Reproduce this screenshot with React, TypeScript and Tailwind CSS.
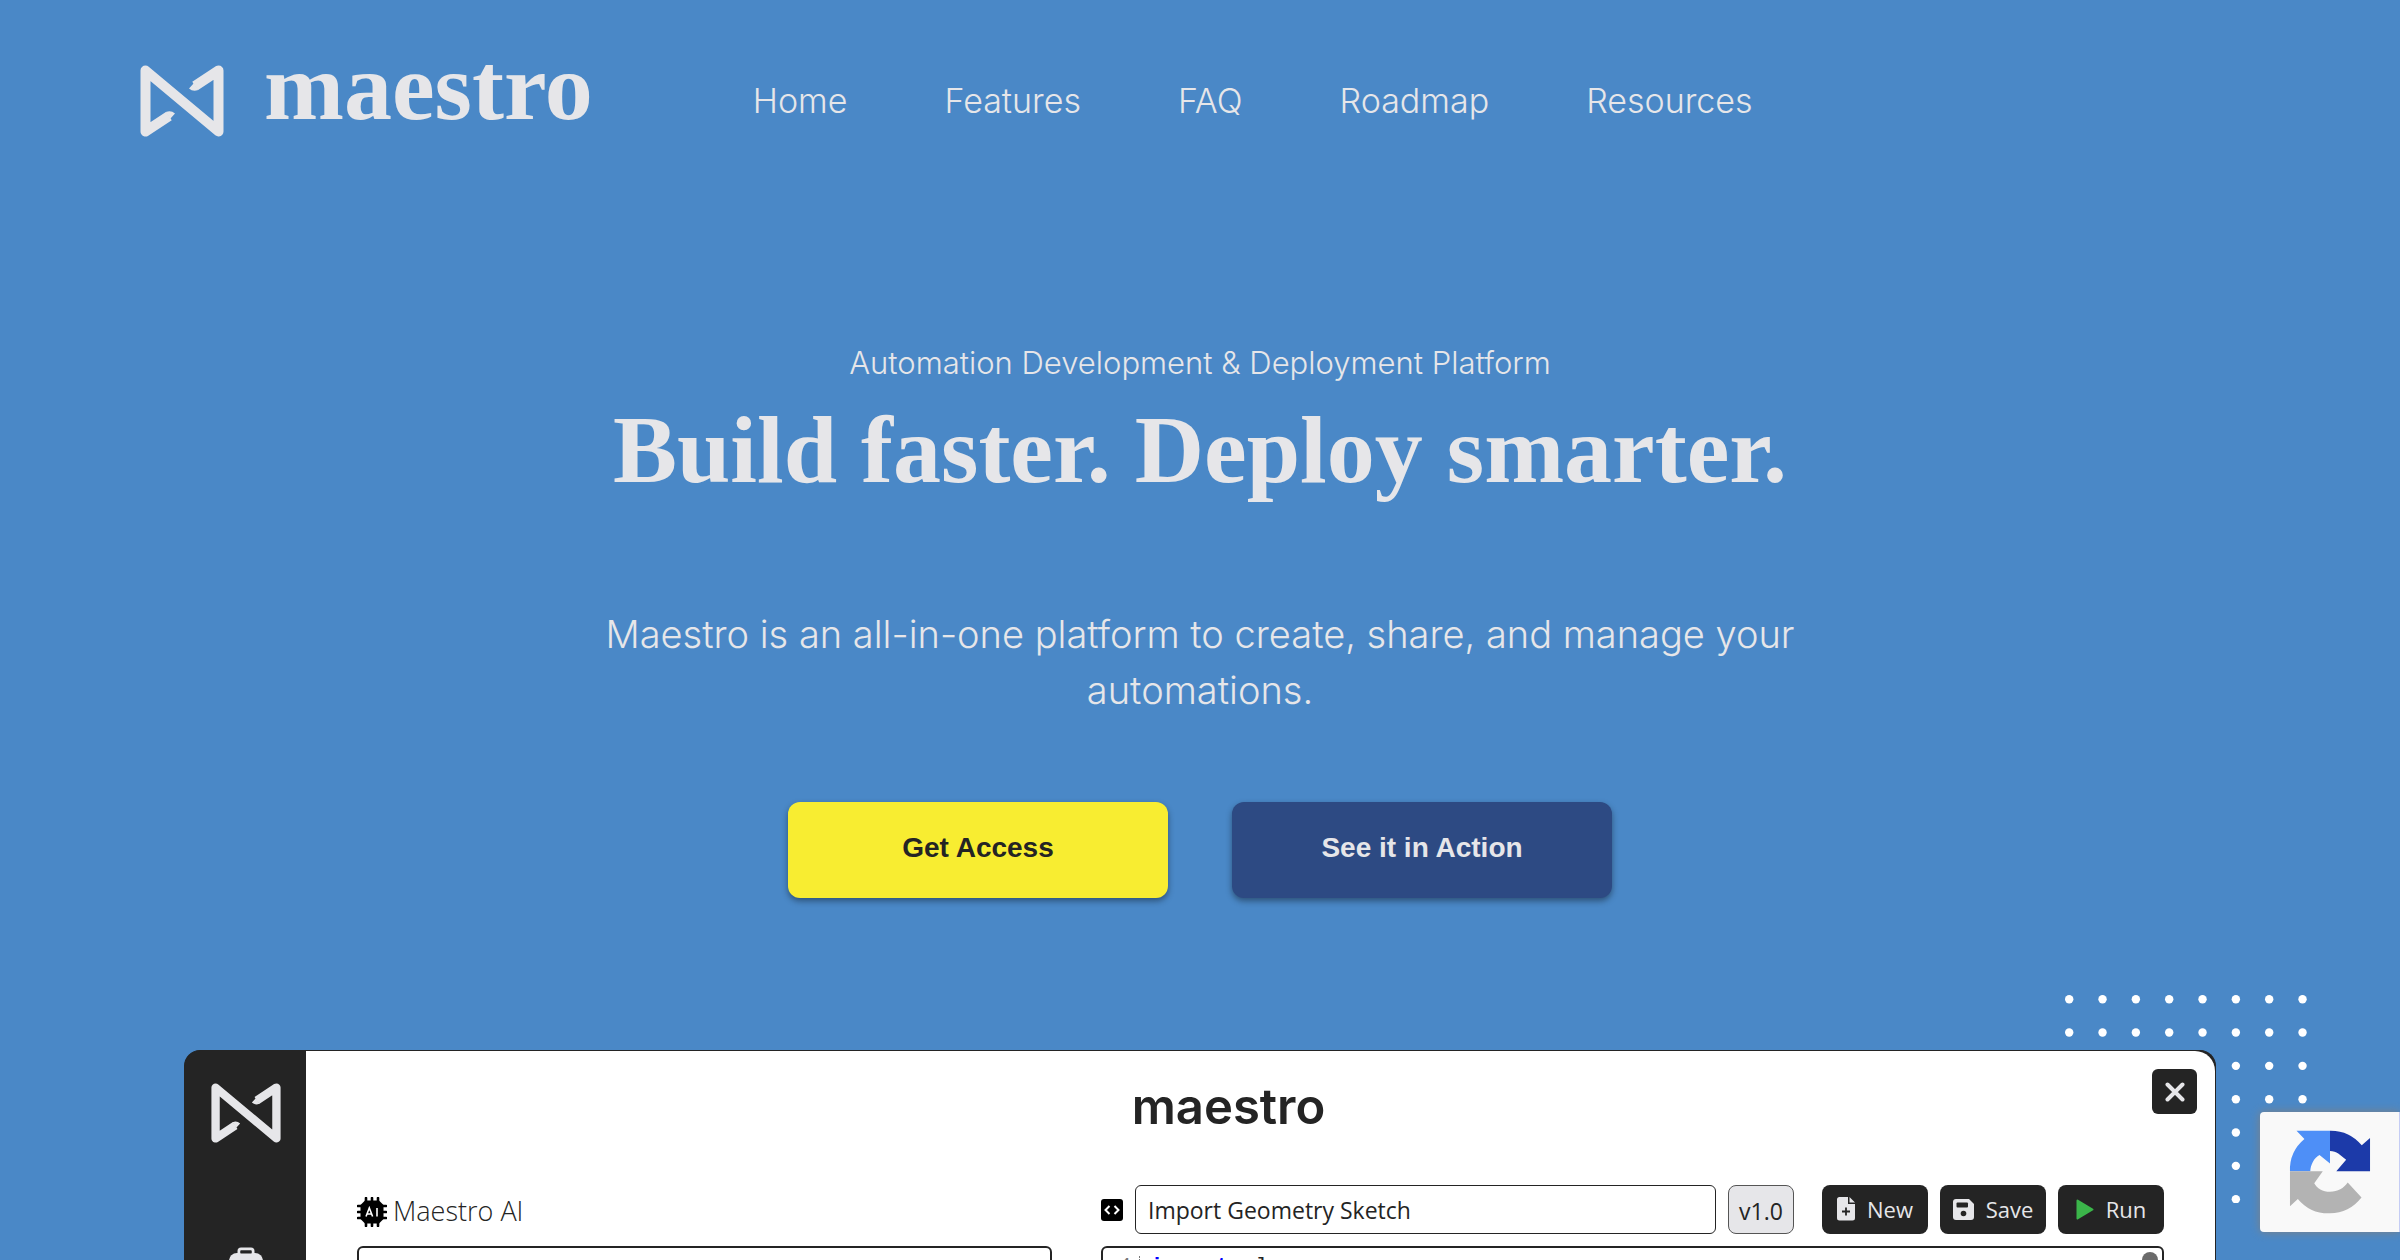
import type { ReactNode } from "react";

const NAV = ["Home", "Features", "FAQ", "Roadmap", "Resources"];

function Mark({ className }: { className: string }) {
  return (
    <svg viewBox="0 0 84 72" className={className} aria-hidden="true">
      <path
        d="M29 51 L5.500 66.500 V5.500 L78.500 66.500 V5.500 L55 21"
        fill="none"
        stroke="#e6e6e9"
        strokeWidth="10"
        strokeLinejoin="round"
      />
      <path d="M26 47 Q31 45 35 48.500 L30 54z M58 25 Q53 27 49 23.500 L54 18z" fill="#e6e6e9" />
    </svg>
  );
}

function ChipIcon() {
  return (
    <svg viewBox="0 0 30 30" className="size-[30px] shrink-0" aria-hidden="true">
      <path d="M9 1v28M15 1v28M21 1v28M1 9h28M1 15h28M1 21h28" stroke="#000" strokeWidth="2.600" strokeLinecap="round" />
      <path d="M8 3.500h14l4.500 4.500v14L22 26.500H8L3.500 22V8z" fill="#000" />
      <path d="M9 19.500 12.300 11 15.600 19.500M10.200 17h4.200M20 11v8.500" fill="none" stroke="#fff" strokeWidth="1.600" />
    </svg>
  );
}

function CodeIcon() {
  return (
    <svg viewBox="0 0 22 22" className="size-[22px] shrink-0" aria-hidden="true">
      <rect width="22" height="22" rx="3" fill="#000" />
      <path d="m8.500 7-4 4 4 4M13.500 7l4 4-4 4" fill="none" stroke="#fff" strokeWidth="2" />
    </svg>
  );
}

function NewIcon() {
  return (
    <svg viewBox="0 0 18 24" className="h-6 w-[18px]" aria-hidden="true">
      <path d="M2.500 0H11v7h7v14a2.500 2.500 0 0 1-2.500 2.500h-13A2.500 2.500 0 0 1 0 21V2.500A2.500 2.500 0 0 1 2.500 0zM12.500 0 18 5.500h-5.500z" fill="#e6e6e9" />
      <path d="M9 10.500v8M5 14.500h8" stroke="#242424" strokeWidth="1.800" />
    </svg>
  );
}

function SaveIcon() {
  return (
    <svg viewBox="0 0 21 21" className="size-[21px]" aria-hidden="true">
      <path d="M3 0h13l5 5v13a3 3 0 0 1-3 3H3a3 3 0 0 1-3-3V3a3 3 0 0 1 3-3z" fill="#e6e6e9" />
      <rect x="3.500" y="3.500" width="11.500" height="5" rx="1" fill="#242424" />
      <circle cx="10.500" cy="14.500" r="2.800" fill="#242424" />
    </svg>
  );
}

function RunIcon() {
  return (
    <svg viewBox="0 0 18 21" className="h-[21px] w-[18px]" aria-hidden="true">
      <path d="M1.500 1.500 16.500 10.500 1.500 19.500z" fill="#3bb54a" stroke="#3bb54a" strokeWidth="2" strokeLinejoin="round" />
    </svg>
  );
}

function ToolButton({ icon, label }: { icon: ReactNode; label: string }) {
  return (
    <button type="button" className="flex h-[49px] w-[106px] items-center justify-center gap-3 rounded-lg bg-[#242424] pb-px font-['Open_Sans',sans-serif] text-[22px] text-[#e6e6e9]">
      {icon}
      {label}
    </button>
  );
}

function Dots() {
  return (
    <svg viewBox="0 0 242 208" className="absolute top-[-55px] right-[-91px] h-[208px] w-[242px]" fill="#fff" aria-hidden="true">
      {Array.from({ length: 56 }, (_, i) => (
        <circle key={i} cx={4.200 + (i % 8) * 33.333} cy={4.200 + Math.floor(i / 8) * 33.333} r="4.200" />
      ))}
    </svg>
  );
}

function Captcha() {
  return (
    <aside className="absolute right-0 bottom-7 z-20 flex h-[120px] w-[140px] items-center rounded-l border-r border-[#c5cdf5] bg-[#f9f9f9] pl-7 shadow-[0_0_10px_#808080]" aria-label="reCAPTCHA">
      <svg viewBox="0 0 64 64" className="size-[84px]" aria-hidden="true">
        <path fill="#1c3aa9" d="M62.500 31.500V6l-6.300 5.700A30.600 30.600 0 0 0 32 0.500v15.500c2.500.1 4.600.9 6.300 1.900l6 4.800-7.500 8.800z" />
        <path fill="#4e8ff7" d="M32 0.500H6.500l6 6.300A30.600 30.600 0 0 0 1.500 31.500H17c0-2.500.7-5 2-7.400 1.300-2.300 3-4.100 5-5.100L32 25.500z" />
        <path fill="#b3b3b3" d="M1.500 31.500V58l6-5.500A30.600 30.600 0 0 0 32 63.500c9.500 0 18-4.300 24-12L45.500 40c-3 4.300-7.500 7-13.500 7-5.500 0-10-2.500-12-6.500l6.500-9z" />
      </svg>
    </aside>
  );
}

export default function App() {
  return (
    <div className="relative flex h-screen flex-col overflow-hidden bg-[#4a88c7] font-['Inter',sans-serif] text-[#e6e6e9]">
      <header className="flex h-[200px] shrink-0 items-start pt-10 pl-[140px]">
        <a href="#home" className="flex items-center gap-10 font-['Liberation_Serif',serif] text-[96px] leading-[110px] font-bold">
          <Mark className="mt-5 h-[72px] w-[84px]" />
          <span className="-mt-2">maestro</span>
        </a>
        <nav className="mt-9 ml-40 flex gap-[97px] text-[34px] leading-[50px] font-light">
          {NAV.map((item) => (
            <a key={item} href={"#" + item.toLowerCase()}>{item}</a>
          ))}
        </nav>
      </header>

      <main className="flex min-h-0 flex-1 flex-col">
        <section className="flex shrink-0 flex-col items-center pt-[140px] text-center">
          <p className="text-[31px] leading-[46px] font-light">Automation Development &amp; Deployment Platform</p>
          <h1 className="mt-2 font-['Liberation_Serif',serif] text-[96px] leading-[112px] font-bold">Build faster. Deploy smarter.</h1>
          <p className="mt-[100px] max-w-[1280px] text-[38px] leading-[56px] font-light">
            Maestro is an all-in-one platform to create, share, and manage your
            <br />
            automations.
          </p>
          <div className="mt-[84px] flex gap-16 font-['Liberation_Sans',sans-serif] text-[28px] font-bold">
            <button type="button" className="h-24 w-[380px] rounded-xl bg-[#f8ed31] pb-1 text-[#242424] shadow-[0_3px_6px_rgba(0,0,0,0.4)]">Get Access</button>
            <button type="button" className="h-24 w-[380px] rounded-xl bg-[#2d4a83] pb-1 shadow-[0_3px_6px_rgba(0,0,0,0.4)]">See it in Action</button>
          </div>
        </section>

        <section className="relative mx-[184px] mt-[152px] flex min-h-0 flex-1">
          <Dots />
          <div className="relative flex min-h-0 flex-1 overflow-hidden rounded-t-2xl border border-b-0 border-[#242424] bg-[#242424]">
            <div className="flex w-[121px] shrink-0 flex-col items-center bg-[#242424] pt-8">
              <Mark className="h-[60px] w-[70px] shrink-0" />
              <svg viewBox="0 0 40 40" className="mt-[103px] h-10 w-10 shrink-0" aria-hidden="true">
                <path d="M13 9V5a2 2 0 0 1 2-2h10a2 2 0 0 1 2 2v4" fill="none" stroke="#e6e6e9" strokeWidth="3" />
                <path d="M11 7h18a8 8 0 0 1 8 8v20H3V15a8 8 0 0 1 8-8z" fill="#e6e6e9" />
                <path d="M14.500 4.500h11v3h-11z" fill="#242424" />
              </svg>
            </div>
            <div className="relative min-w-0 flex-1 rounded-tr-[20px] bg-white px-[51px] text-[#242424]">
              <div className="flex h-[134px] items-start justify-center pt-[26px] pr-16">
                <h2 className="text-[49px] leading-[60px] font-semibold">maestro</h2>
              </div>
              <button type="button" aria-label="Close" className="absolute top-[18px] right-[18px] flex size-[45px] items-center justify-center rounded-md bg-[#242424]">
                <svg viewBox="0 0 20 20" className="size-5" aria-hidden="true">
                  <path d="M2.500 2.500l15 15M17.500 2.500l-15 15" stroke="#e6e6e9" strokeWidth="4" strokeLinecap="round" />
                </svg>
              </button>
              <div className="flex gap-[49px]">
                <div className="w-[695px] shrink-0">
                  <label htmlFor="prompt" className="flex h-[49px] items-center gap-1.5 pt-1 font-['Open_Sans',sans-serif] text-[27px] font-light">
                    <ChipIcon />
                    Maestro AI
                  </label>
                  <textarea id="prompt" className="mt-3 block h-40 w-full resize-none rounded-md border-2 border-[#242424]" />
                </div>
                <div className="min-w-0 flex-1">
                  <div className="flex items-center font-['Open_Sans',sans-serif] text-[23px]">
                    <CodeIcon />
                    <input aria-label="Script name" defaultValue="Import Geometry Sketch" className="ml-3 h-[49px] min-w-0 flex-1 rounded-md border border-[#242424] px-3" />
                    <span className="ml-3 flex h-[49px] w-[66px] items-center justify-center rounded-lg border border-[#555] bg-[#e6e6e9] pt-1">v1.0</span>
                    <div className="ml-7 flex gap-3">
                      <ToolButton icon={<NewIcon />} label="New" />
                      <ToolButton icon={<SaveIcon />} label="Save" />
                      <ToolButton icon={<RunIcon />} label="Run" />
                    </div>
                  </div>
                  <div className="relative mt-3 h-40 overflow-hidden rounded-md border-2 border-[#242424]">
                    <pre className="flex pt-2 font-['Liberation_Mono',monospace] text-[22px] leading-6">
                      <span className="w-[37px] border-r border-dotted border-[#777] pr-1.5 text-right text-[#777]">1</span>
                      <code className="pl-2.5 font-['Liberation_Mono',monospace]"><b className="text-[#0000ff]">import</b> clr</code>
                    </pre>
                    <span className="absolute top-1 right-1 h-14 w-4 rounded-full bg-[#6b6b6b]" />
                  </div>
                </div>
              </div>
            </div>
          </div>
        </section>
      </main>
      <Captcha />
    </div>
  );
}
